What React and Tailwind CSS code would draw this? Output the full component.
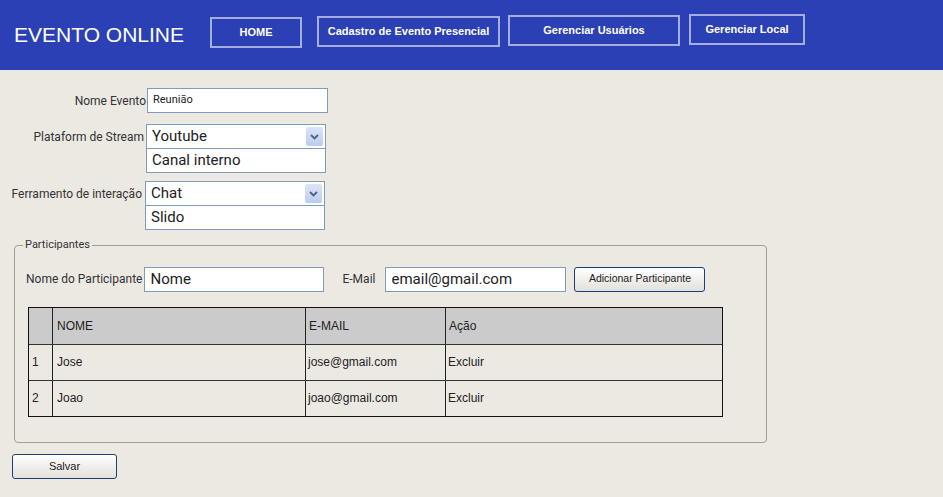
import React from "react";

function Chevron() {
  return (
    <svg width="9" height="6" viewBox="0 0 9 6">
      <path d="M1 1 L4.5 4.5 L8 1" fill="none" stroke="#4d6185" strokeWidth="1.8" />
    </svg>
  );
}

function SelectList({ value, option, w }) {
  return (
    <div className={`flex flex-col ${w}`}>
      <div className="flex h-[25px] items-center justify-between border border-[#7f9db9] bg-white pl-[5px] pr-[2px] text-[15px] text-[#222]">
        <span>{value}</span>
        <span className="flex h-[19px] w-[17px] items-center justify-center rounded-[2px] bg-gradient-to-b from-[#dce5f7] to-[#bccbf0]">
          <Chevron />
        </span>
      </div>
      <div className="flex h-[24px] items-center border border-t-0 border-[#7f9db9] bg-white pl-[5px] text-[15px] text-[#222]">
        {option}
      </div>
    </div>
  );
}

function NavBtn({ children, w, mt }) {
  return (
    <div
      className={`flex h-[31px] items-center justify-center border-2 border-[#a5aee0] text-[11px] font-bold text-white ${w} ${mt}`}
    >
      {children}
    </div>
  );
}

export default function App() {
  const rows = [
    ["1", "Jose", "jose@gmail.com", "Excluir"],
    ["2", "Joao", "joao@gmail.com", "Excluir"],
  ];
  return (
    <div className="h-[497px] w-[943px] overflow-hidden bg-[#ece9e3] font-['Roboto','Liberation_Sans',sans-serif]">
      <header className="flex h-[70px] items-start bg-[#2b40b5] pl-[14px]">
        <h1 className="mt-[22px] w-[196px] text-[21px] leading-[26px] text-white font-['Liberation_Sans',sans-serif]">
          EVENTO ONLINE
        </h1>
        <div className="flex items-start gap-[8px] font-['Liberation_Sans',sans-serif]">
          <NavBtn w="w-[92px]" mt="mt-[17px]">HOME</NavBtn>
          <NavBtn w="w-[183px]" mt="mt-[16px] ml-[7px]">Cadastro de Evento Presencial</NavBtn>
          <NavBtn w="w-[172px]" mt="mt-[15px]">Gerenciar Usuários</NavBtn>
          <NavBtn w="w-[116px]" mt="mt-[14px] ml-[1px]">Gerenciar Local</NavBtn>
        </div>
      </header>

      <main className="flex flex-col pl-[12px] pt-[18px]">
        <div className="flex items-center">
          <span className="flex w-[134px] justify-end whitespace-nowrap text-[12px] text-[#333]">Nome Evento</span>
          <div className="ml-[1px] flex h-[25px] w-[181px] items-center border border-[#7f9db9] bg-white pl-[5px] text-[11px] text-[#222]">
            Reunião
          </div>
        </div>

        <div className="mt-[11px] flex items-start">
          <span className="mt-[4px] flex w-[132px] justify-end whitespace-nowrap text-[12px] text-[#333]">Plataform de Stream</span>
          <div className="ml-[2px]">
            <SelectList value="Youtube" option="Canal interno" w="w-[180px]" />
          </div>
        </div>

        <div className="mt-[8px] flex items-start">
          <span className="mt-[4px] flex w-[130px] justify-end whitespace-nowrap text-[12px] text-[#333]">Ferramento de interação</span>
          <div className="ml-[3px]">
            <SelectList value="Chat" option="Slido" w="w-[180px]" />
          </div>
        </div>

        <fieldset className="ml-[2px] mt-[7px] h-[206px] w-[753px] rounded-[4px] border border-[#a19e96] pl-[11px] pt-[13px]">
          <legend className="-ml-[3px] px-[2px] text-[11px] text-[#333]">Participantes</legend>
          <div className="flex items-center">
            <span className="text-[12px] text-[#333]">Nome do Participante</span>
            <div className="ml-[2px] flex h-[25px] w-[180px] items-center border border-[#7f9db9] bg-white pl-[5px] text-[15px] text-[#222]">
              Nome
            </div>
            <span className="ml-[18px] text-[12px] text-[#333]">E-Mail</span>
            <div className="ml-[10px] flex h-[25px] w-[181px] items-center border border-[#7f9db9] bg-white pl-[5px] text-[15px] text-[#222]">
              email@gmail.com
            </div>
            <div className="ml-[8px] flex h-[25px] w-[131px] items-center justify-center rounded-[3px] border border-[#1e3f6f] bg-gradient-to-b from-white to-[#e2e0da] text-[10.5px] text-[#222] font-['Liberation_Sans',sans-serif]">
              Adicionar Participante
            </div>
          </div>

          <div className="ml-[2px] mt-[15px] w-[695px] border-[1.5px] border-[#111] text-[12px] text-[#222] font-['Liberation_Sans',sans-serif]">
            <div className="flex h-[36px] bg-[#cbcbcb]">
              <div className="w-[24px] border-r border-[#222]"></div>
              <div className="flex w-[253px] items-center border-r border-[#222] pl-[4px]">NOME</div>
              <div className="flex w-[140px] items-center border-r border-[#222] pl-[3px]">E-MAIL</div>
              <div className="flex flex-1 items-center pl-[3px]">Ação</div>
            </div>
            {rows.map((r) => (
              <div key={r[0]} className="flex h-[36px] border-t-[1.5px] border-[#333]">
                <div className="flex w-[24px] items-center border-r border-[#222] pl-[3px]">{r[0]}</div>
                <div className="flex w-[253px] items-center border-r border-[#222] pl-[4px]">{r[1]}</div>
                <div className="flex w-[140px] items-center border-r border-[#222] pl-[2px]">{r[2]}</div>
                <div className="flex flex-1 items-center pl-[2px]">{r[3]}</div>
              </div>
            ))}
          </div>
        </fieldset>

        <div className="mt-[11px] flex h-[25px] w-[105px] items-center justify-center rounded-[3px] border border-[#1e3f6f] bg-gradient-to-b from-white to-[#e2e0da] text-[11px] text-[#222] font-['Liberation_Sans',sans-serif]">
          Salvar
        </div>
      </main>
    </div>
  );
}
